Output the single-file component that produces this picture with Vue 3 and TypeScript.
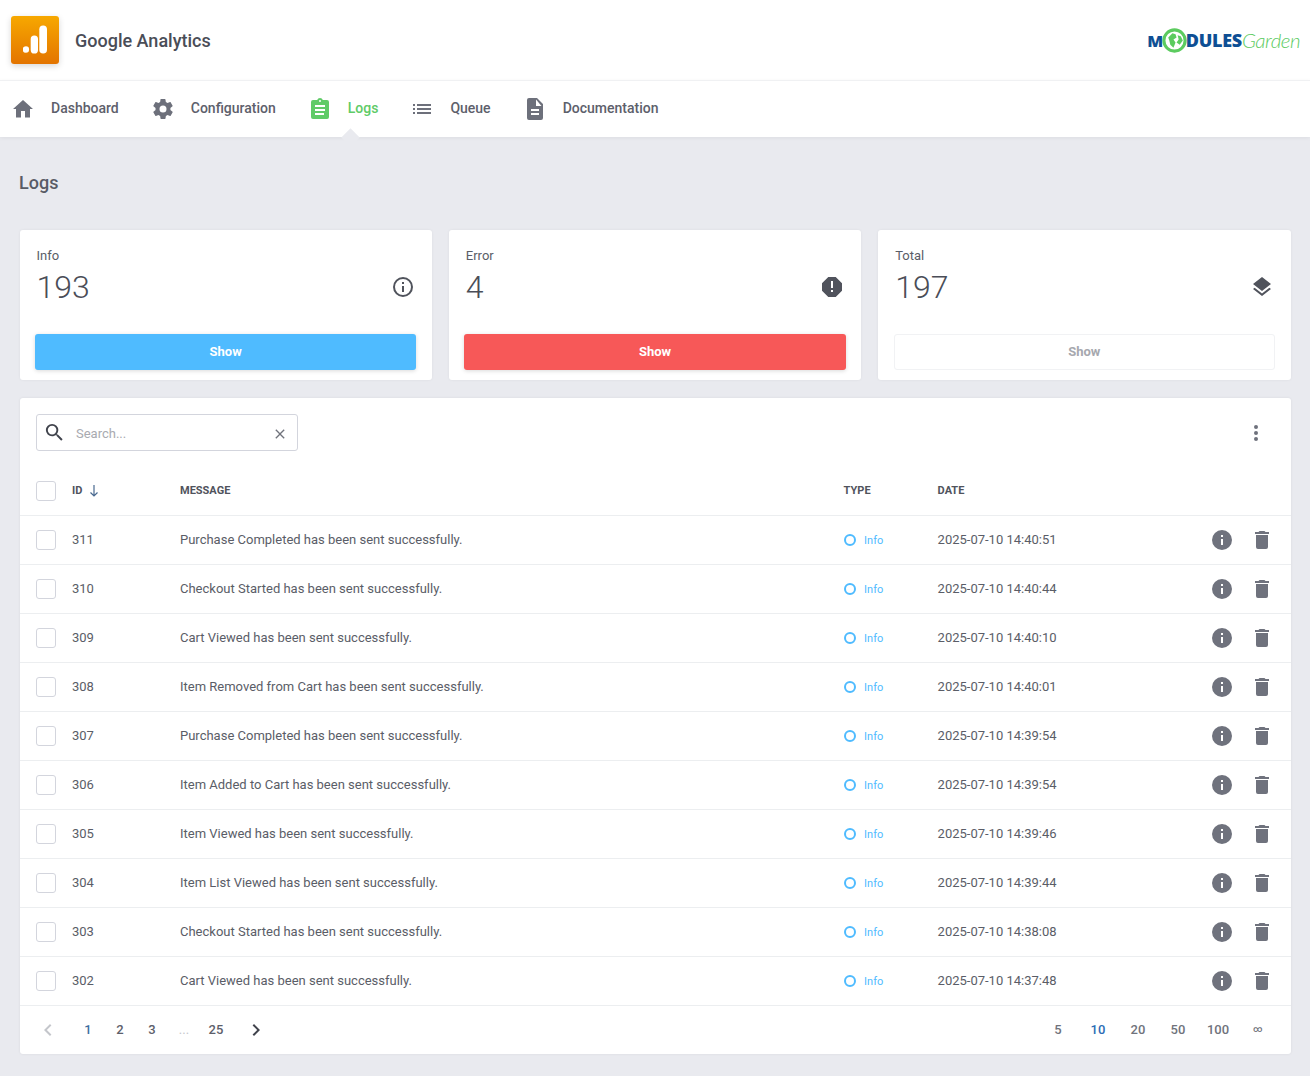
<script setup lang="ts">
interface Log { id: number; message: string; date: string }
const logs: Log[] = [
  { id: 311, message: 'Purchase Completed has been sent successfully.', date: '2025-07-10 14:40:51' },
  { id: 310, message: 'Checkout Started has been sent successfully.', date: '2025-07-10 14:40:44' },
  { id: 309, message: 'Cart Viewed has been sent successfully.', date: '2025-07-10 14:40:10' },
  { id: 308, message: 'Item Removed from Cart has been sent successfully.', date: '2025-07-10 14:40:01' },
  { id: 307, message: 'Purchase Completed has been sent successfully.', date: '2025-07-10 14:39:54' },
  { id: 306, message: 'Item Added to Cart has been sent successfully.', date: '2025-07-10 14:39:54' },
  { id: 305, message: 'Item Viewed has been sent successfully.', date: '2025-07-10 14:39:46' },
  { id: 304, message: 'Item List Viewed has been sent successfully.', date: '2025-07-10 14:39:44' },
  { id: 303, message: 'Checkout Started has been sent successfully.', date: '2025-07-10 14:38:08' },
  { id: 302, message: 'Cart Viewed has been sent successfully.', date: '2025-07-10 14:37:48' },
]
const pages = ['1', '2', '3']
const sizes = ['5', '10', '20', '50', '100']
</script>

<template>
  <div class="page">
    <header class="top">
      <div class="brand">
        <div class="app-logo">
          <svg width="24" height="29" viewBox="0 0 24 29">
            <circle cx="2.9" cy="24.5" r="3.2" fill="#fff" />
            <rect x="7.7" y="10.5" width="7.3" height="18" rx="3.6" fill="#fff" />
            <rect x="16.3" y="0.5" width="7.7" height="28" rx="3.8" fill="#fff" />
          </svg>
        </div>
        <span class="app-name">Google Analytics</span>
      </div>
      <div class="mg-logo">
        <span class="mg-bold mg-m">M</span>
        <svg class="globe" width="25" height="25" viewBox="0 0 24 24">
          <circle cx="12" cy="12" r="10.2" fill="#fff" stroke="#5ccb5f" stroke-width="3" />
          <path d="M6 9l4-4 3 1 1 3-3 2 2 3-2 5-3-3-1-4zM15 7l3 1 2 4-3 4-3-2 2-3z" fill="#5ccb5f" />
        </svg>
        <span class="mg-bold">DULES</span><span class="mg-light">Garden</span>
      </div>
    </header>

    <nav class="nav">
      <a class="nav-item">
        <svg class="nav-icon" viewBox="0 0 24 24"><path d="M10 20.5v-6.5h4v6.5h5v-8.5h3L12 3 2 12h3v8.5z" /></svg>
        <span>Dashboard</span>
      </a>
      <a class="nav-item">
        <svg class="nav-icon" viewBox="0 0 24 24"><path d="M19.4 13c.04-.33.06-.66.06-1s-.02-.67-.06-1l2.1-1.65c.2-.15.25-.42.12-.64l-2-3.46c-.12-.22-.39-.3-.61-.22l-2.49 1a7.3 7.3 0 0 0-1.69-.98l-.38-2.65A.49.49 0 0 0 14 2h-4c-.25 0-.46.18-.49.42l-.38 2.65c-.61.25-1.17.59-1.69.98l-2.49-1a.5.5 0 0 0-.61.22l-2 3.46c-.13.22-.07.49.12.64L4.57 11c-.04.33-.07.67-.07 1s.03.67.07 1l-2.11 1.65c-.19.15-.25.42-.12.64l2 3.46c.12.22.39.3.61.22l2.49-1c.52.4 1.08.73 1.69.98l.38 2.65c.03.24.24.42.49.42h4c.25 0 .46-.18.49-.42l.38-2.65c.61-.25 1.17-.59 1.69-.98l2.49 1c.23.09.49 0 .61-.22l2-3.46c.12-.22.07-.49-.12-.64zM12 15.5a3.5 3.5 0 1 1 0-7 3.5 3.5 0 0 1 0 7z" /></svg>
        <span>Configuration</span>
      </a>
      <a class="nav-item active">
        <svg class="nav-icon" viewBox="0 0 24 24"><path d="M19 3h-4.18A3 3 0 0 0 12 1a3 3 0 0 0-2.82 2H5a2 2 0 0 0-2 2v15a2 2 0 0 0 2 2h14a2 2 0 0 0 2-2V5a2 2 0 0 0-2-2zm-7 0a1 1 0 1 1 0 2 1 1 0 0 1 0-2zm4 15H7v-2h9zm1-4H7v-2h10zm0-4H7V8h10z" /></svg>
        <span>Logs</span>
      </a>
      <a class="nav-item">
        <svg class="nav-icon" viewBox="0 0 24 24"><path d="M3 13h2v-2H3zm0 4h2v-2H3zm0-8h2V7H3zm4 4h14v-2H7zm0 4h14v-2H7zM7 7v2h14V7z" /></svg>
        <span>Queue</span>
      </a>
      <a class="nav-item">
        <svg class="nav-icon" viewBox="0 0 24 24"><path d="M14 1H6a2 2 0 0 0-2 2v18a2 2 0 0 0 2 2h12a2 2 0 0 0 2-2V7zm2 17H8v-2h8zm0-4H8v-2h8zm-3-5V2.5L18.5 9z" /></svg>
        <span>Documentation</span>
      </a>
    </nav>

    <main class="content">
      <h1 class="title">Logs</h1>

      <section class="stats">
        <div class="stat">
          <div class="stat-label">Info</div>
          <div class="stat-row">
            <span class="stat-num">193</span>
            <svg class="stat-icon" viewBox="0 0 24 24"><path d="M11 7h2v2h-2zm0 4h2v6h-2zm1-9a10 10 0 1 0 0 20 10 10 0 0 0 0-20zm0 18a8 8 0 1 1 0-16 8 8 0 0 1 0 16z" /></svg>
          </div>
          <button class="btn btn-info">Show</button>
        </div>
        <div class="stat">
          <div class="stat-label">Error</div>
          <div class="stat-row">
            <span class="stat-num">4</span>
            <svg class="stat-icon" viewBox="0 0 24 24"><path d="M15.73 2H8.27L2 8.27v7.46L8.27 22h7.46L22 15.73V8.27zM13 17h-2v-2h2zm0-4h-2V6h2z" /></svg>
          </div>
          <button class="btn btn-error">Show</button>
        </div>
        <div class="stat">
          <div class="stat-label">Total</div>
          <div class="stat-row">
            <span class="stat-num">197</span>
            <svg class="stat-icon" viewBox="0 0 24 24"><path d="M12 18.54l-7.38-5.73L3 14.07l9 7 9-7-1.63-1.27zM12 16l7.36-5.73L21 9l-9-7-9 7 1.63 1.27z" /></svg>
          </div>
          <button class="btn btn-plain">Show</button>
        </div>
      </section>

      <section class="table-card">
        <div class="toolbar">
          <div class="search">
            <svg class="search-icon" viewBox="0 0 24 24"><path d="M15.5 14h-.79l-.28-.27A6.47 6.47 0 0 0 16 9.5 6.5 6.5 0 1 0 9.5 16c1.61 0 3.09-.59 4.23-1.57l.27.28v.79l5 4.99L20.49 19zm-6 0a4.5 4.5 0 1 1 0-9 4.5 4.5 0 0 1 0 9z" /></svg>
            <span class="placeholder">Search...</span>
            <svg class="clear-icon" viewBox="0 0 24 24"><path d="M19 6.41L17.59 5 12 10.59 6.41 5 5 6.41 10.59 12 5 17.59 6.41 19 12 13.41 17.59 19 19 17.59 13.41 12z" /></svg>
          </div>
          <svg class="more" viewBox="0 0 24 24"><path d="M12 8a2 2 0 1 0 0-4 2 2 0 0 0 0 4zm0 2a2 2 0 1 0 0 4 2 2 0 0 0 0-4zm0 6a2 2 0 1 0 0 4 2 2 0 0 0 0-4z" /></svg>
        </div>

        <div class="row head">
          <span class="cell-check"><i class="check"></i></span>
          <span class="cell-id">ID
            <svg class="sort" viewBox="0 0 12 14"><path d="M6 1v11M2.5 8.5L6 12l3.5-3.5" fill="none" stroke="#4a6a90" stroke-width="1.2" /></svg>
          </span>
          <span class="cell-msg">MESSAGE</span>
          <span class="cell-type">TYPE</span>
          <span class="cell-date">DATE</span>
        </div>

        <div v-for="log in logs" :key="log.id" class="row item">
          <span class="cell-check"><i class="check"></i></span>
          <span class="cell-id">{{ log.id }}</span>
          <span class="cell-msg">{{ log.message }}</span>
          <span class="cell-type"><i class="dot"></i><span class="type-text">Info</span></span>
          <span class="cell-date">{{ log.date }}</span>
          <span class="cell-actions">
            <svg class="act" viewBox="0 0 24 24"><path d="M12 2a10 10 0 1 0 0 20 10 10 0 0 0 0-20zm1 15h-2v-6h2zm0-8h-2V7h2z" /></svg>
            <svg class="act" viewBox="0 0 24 24"><path d="M6 19a2 2 0 0 0 2 2h8a2 2 0 0 0 2-2V7H6zM19 4h-3.5l-1-1h-5l-1 1H5v2h14z" /></svg>
          </span>
        </div>

        <footer class="pager">
          <div class="pages">
            <svg class="chev chev-off" viewBox="0 0 24 24"><path d="M15.41 7.41L14 6l-6 6 6 6 1.41-1.41L10.83 12z" /></svg>
            <span v-for="p in pages" :key="p" class="pg" :class="{ current: p === '1' }">{{ p }}</span>
            <span class="pg dots">...</span>
            <span class="pg">25</span>
            <svg class="chev chev-next" viewBox="0 0 24 24"><path d="M10 6L8.59 7.41 13.17 12l-4.58 4.59L10 18l6-6z" /></svg>
          </div>
          <div class="sizes">
            <span v-for="s in sizes" :key="s" class="sz" :class="{ current: s === '10' }">{{ s }}</span>
            <span class="sz inf">∞</span>
          </div>
        </footer>
      </section>
    </main>
  </div>
</template>

<style scoped>
.page {
  min-height: 1076px;
  background: #e9eaef;
  font-family: Roboto, "Liberation Sans", sans-serif;
  color: #545760;
  box-sizing: border-box;
}
.top {
  height: 80px;
  background: #fff;
  display: flex;
  align-items: center;
  justify-content: space-between;
  padding: 0 10px 0 11px;
}
.brand { display: flex; align-items: center; }
.app-logo {
  width: 48px;
  height: 48px;
  border-radius: 3px;
  background: linear-gradient(180deg, #f7a800, #e37400);
  box-shadow: 0 2px 6px rgba(0, 0, 0, .16);
  display: flex;
  align-items: center;
  justify-content: center;
  margin-top: -1px;
}
.app-name { margin-left: 16px; font-size: 18px; font-weight: 500; color: #4a4d57; line-height: 1; margin-top: 2px; }
.mg-logo { display: flex; align-items: center; height: 25px; }
.mg-bold { font-family: "Open Sans", sans-serif; font-weight: 800; font-size: 18px; letter-spacing: -.3px; color: #0e4f94; line-height: 25px; }
.mg-m { font-size: 16.5px; }
.mg-light { font-family: Lato, sans-serif; font-weight: 300; font-size: 20.5px; font-style: italic; letter-spacing: -.5px; color: #5ccb5f; line-height: 25px; }
.globe { margin: 0 -1px 0 -1px; }
.nav {
  height: 56px;
  background: #fff;
  border-top: 1px solid #f0f1f3;
  box-shadow: 0 1px 4px rgba(0, 0, 0, .06);
  display: flex;
  align-items: center;
  padding-left: 11px;
  position: relative;
}
.nav-item {
  display: flex;
  align-items: center;
  font-size: 14px;
  font-weight: 500;
  color: #5d606b;
  margin-right: 32px;
  position: relative;
  height: 100%;
}
.nav-item span { margin-top: -2px; }
.nav-icon { width: 24px; height: 24px; fill: #6d707b; margin-right: 16px; }
.active { color: #5fcb67; }
.active .nav-icon { fill: #5fcb67; }
.active::after {
  content: "";
  position: absolute;
  left: 36px;
  bottom: -6.5px;
  width: 13px;
  height: 13px;
  background: #e9eaef;
  transform: rotate(45deg);
}
.content { padding: 0 19.5px; }
.title { margin: 0; padding-top: 35px; height: 93px; box-sizing: border-box; font-size: 18px; line-height: 22px; font-weight: 500; color: #595c66; margin-left: -.5px; }
.stats { display: grid; grid-template-columns: repeat(3, 1fr); gap: 17px; }
.stat {
  height: 150px;
  background: #fff;
  border-radius: 3px;
  box-shadow: 0 0 3px rgba(0, 0, 0, .06);
  padding: 18px 15.5px 10px 15.5px;
  box-sizing: border-box;
  display: flex;
  flex-direction: column;
}
.stat-label { font-size: 13px; line-height: 15px; padding-left: 1.5px; color: #5a5d67; }
.stat-row { display: flex; justify-content: space-between; align-items: center; height: 40px; margin-top: 4px; padding-right: 1.5px; }
.stat-num { font-size: 32px; font-weight: 300; color: #4a4d57; line-height: 40px; padding-left: 1.5px; }
.stat-icon { width: 24px; height: 24px; fill: #50535c; }
.btn {
  margin-top: auto;
  height: 36px;
  border: 0;
  border-radius: 3px;
  padding: 0 0 2px;
  font: 700 13px Roboto, "Liberation Sans", sans-serif;
  color: #fff;
  width: 100%;
}
.btn-info { background: #4fbbff; box-shadow: 0 1px 4px rgba(0, 0, 0, .15); }
.btn-error { background: #f75858; box-shadow: 0 1px 4px rgba(0, 0, 0, .15); }
.btn-plain { background: #fff; border: 1px solid #f1f2f4; color: #a6a8ae; padding-bottom: 1px; }
.table-card {
  margin-top: 18px;
  height: 656px;
  background: #fff;
  border-radius: 3px;
  box-shadow: 0 0 3px rgba(0, 0, 0, .07);
  display: flex;
  flex-direction: column;
}
.toolbar {
  height: 69px;
  flex: none;
  display: flex;
  align-items: center;
  justify-content: space-between;
  padding: 0 22.5px 0 16.5px;
}
.search {
  width: 262px;
  height: 37px;
  box-sizing: border-box;
  border: 1px solid #d3d5dd;
  border-radius: 3px;
  display: flex;
  align-items: center;
  padding: 0 7px 0 6px;
}
.search-icon { width: 23px; height: 23px; fill: #40434c; }
.placeholder { margin: 2px 0 0 10px; font-size: 13px; color: #a8aab0; flex: 1; }
.clear-icon { width: 16px; height: 16px; fill: #70737c; margin: 2px 2px 0 0; }
.more { width: 24px; height: 24px; fill: #6e717c; }
.row {
  display: flex;
  align-items: center;
  height: 49px;
  box-sizing: border-box;
  border-bottom: 1px solid #eceef0;
  font-size: 13px;
  color: #5a5d67;
  flex: none;
}
.head { font-size: 11px; font-weight: 700; color: #50535c; padding-bottom: 1px; }
.item .cell-id, .item .cell-msg, .item .cell-date { margin-top: -2px; }
.cell-check { padding-left: 16.5px; flex: none; display: flex; width: 36px; }
.check { width: 20px; height: 20px; box-sizing: border-box; border: 1px solid #d3d5dd; border-radius: 3px; display: block; }
.cell-id { width: 108px; flex: none; display: flex; align-items: center; }
.sort { width: 12px; height: 14px; margin-left: 6px; }
.cell-msg { width: 663.6px; flex: none; }
.cell-type { width: 94px; flex: none; display: flex; align-items: center; }
.dot { width: 12px; height: 12px; box-sizing: border-box; border: 2px solid #4fbbff; border-radius: 50%; margin-right: 8px; margin-left: .5px; }
.type-text { font-size: 11px; color: #4fbbff; }
.cell-date { width: 255px; flex: none; }
.cell-actions { display: flex; gap: 16px; margin-left: 17.4px; }
.act { width: 24px; height: 24px; fill: #6f727d; }
.pager {
  flex: 1;
  display: flex;
  align-items: center;
  justify-content: space-between;
  padding: 0 12.5px 0 16.5px;
}
.pages { display: flex; align-items: center; }
.pg { width: 32px; text-align: center; font-size: 13px; font-weight: 500; color: #5d606b; margin-top: -2px; }
.pg.current { color: #3d6f9f; }
.dots { color: #c5c7cc; font-weight: 400; }
.chev { width: 24px; height: 24px; fill: #40434c; }
.chev-off { fill: #c4c6cb; margin-right: 12px; }
.chev-next { margin-left: 12px; }
.sizes { display: flex; align-items: center; }
.sz { width: 40px; text-align: center; font-size: 13px; font-weight: 500; color: #70737c; margin-top: -2px; }
.sz.current { color: #2d6cb5; }
.inf { font-size: 9px; }
</style>

<style>
body { margin: 0; background: #e9eaef; }
</style>
